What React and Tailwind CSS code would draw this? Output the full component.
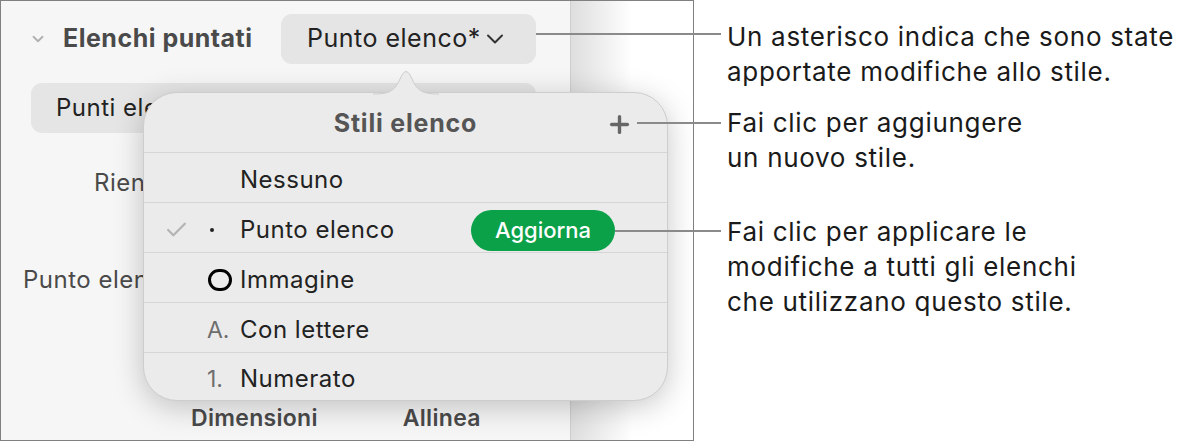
import { Check, ChevronDown, Plus } from "lucide-react";

const font = { fontFamily: "Inter, 'Noto Sans', sans-serif" };

const rows = [
  { label: "Nessuno", marker: null },
  { label: "Punto elenco", marker: "dot", checked: true, update: true },
  { label: "Immagine", marker: "ring" },
  { label: "Con lettere", marker: "A." },
  { label: "Numerato", marker: "1.", last: true },
];

function Marker({ kind }) {
  if (kind === "dot") return <span className="ml-[3px] block h-[4px] w-[4px] rounded-full bg-[#222]" />;
  if (kind === "ring") return <span className="ml-[1px] block h-[22px] w-[24px] rounded-full border-[3px] border-black" />;
  if (kind) return <span className="text-[23px] text-[#6e6e6e]">{kind}</span>;
  return null;
}

function StylePopover() {
  return (
    <div className="absolute left-[142px] top-[91px] w-[525px] h-[309px] rounded-[34px] border border-[#cdcdcd] bg-[#ebebeb] shadow-[0_6px_30px_rgba(0,0,0,0.22)]">
      <svg className="absolute left-[229px] top-[-25px]" width="66" height="27" viewBox="0 0 66 27">
        <path d="M0 26 C14 26 20 24 25 15 L29 7 Q33 0 37 7 L41 15 C46 24 52 26 66 26 L66 27 L0 27 Z" fill="#ebebeb" />
        <path d="M0 26 C14 26 20 24 25 15 L29 7 Q33 0 37 7 L41 15 C46 24 52 26 66 26" fill="none" stroke="#cdcdcd" strokeWidth="1" />
      </svg>

      <div className="grid h-[59px] grid-cols-[1fr_auto_1fr] items-center pt-[3px]">
        <span />
        <span className="text-[25px] font-bold tracking-[0.8px] text-[#555]">Stili elenco</span>
        <span className="justify-self-end pr-[34px] text-[#666]">
          <Plus size={27} strokeWidth={3} />
        </span>
      </div>

      {rows.map((row) => (
        <div
          key={row.label}
          className={`flex items-center border-t border-[#d5d5d5] pl-[20px] pt-[5px] ${row.last ? "h-[48px]" : "h-[50px]"}`}
        >
          <span className="flex w-[25px] justify-center text-[#b4b4b4]">
            {row.checked && <Check size={26} strokeWidth={2.2} />}
          </span>
          <span className="ml-[18px] flex w-[33px] items-center">
            <Marker kind={row.marker} />
          </span>
          <span className="text-[24px] tracking-[0.5px] text-[#222]">{row.label}</span>
          {row.update && (
            <span className="ml-auto mr-[52px] flex h-[41px] w-[144px] items-center justify-center rounded-full bg-[#0aa149] text-[22px] font-medium text-white">
              Aggiorna
            </span>
          )}
        </div>
      ))}
    </div>
  );
}

function Sidebar() {
  return (
    <div className="flex w-[570px] flex-col border-r border-[#cfcfcf] bg-[#f6f6f6]">
      <div className="mt-[13px] flex h-[50px] items-center pl-[28px]">
        <ChevronDown size={18} strokeWidth={2.4} className="text-[#b0b0b0]" />
        <span className="ml-[16px] text-[25px] font-bold tracking-[0.5px] text-[#4a4a4a]">Elenchi puntati</span>
        <div className="ml-auto mr-[34px] flex h-[50px] w-[255px] items-center rounded-[11px] bg-[#e5e5e5] pl-[26px] text-[25px] tracking-[0.5px] text-[#222]">
          Punto elenco*
          <ChevronDown size={28} strokeWidth={1.7} className="text-[#333]" />
        </div>
      </div>

      <div className="ml-[30px] mr-[34px] mt-[19px] flex h-[50px] items-center rounded-[11px] bg-[#e5e5e5] pl-[25px] text-[24px] tracking-[0.5px] text-[#222]">
        Punti elenco
      </div>

      <div className="ml-[93px] mt-[35px] text-[24px] leading-[30px] tracking-[0.5px] text-[#4a4a4a]">Rientro</div>
      <div className="ml-[22px] mt-[67px] text-[24px] leading-[30px] tracking-[0.5px] text-[#4a4a4a]">Punto elenco</div>

      <div className="mt-auto flex pb-[8px] text-[23px] font-semibold leading-[28px] tracking-[0.3px] text-[#4a4a4a]">
        <span className="ml-[190px]">Dimensioni</span>
        <span className="ml-[85px]">Allinea</span>
      </div>
    </div>
  );
}

export default function App() {
  return (
    <div className="relative flex h-[442px] w-[1186px] bg-white" style={font}>
      <div className="relative flex h-[441px] w-[694px] shrink-0 overflow-hidden border border-[#808080]">
        <Sidebar />
        <div className="flex-1 bg-gradient-to-r from-[#dedede] via-white to-white" />
        <StylePopover />
      </div>

      <div className="flex flex-col pl-[33px] pt-[19px] text-[26px] leading-[35px] tracking-[0.7px] text-[#1a1a1a]">
        <p>
          Un asterisco indica che sono state
          <br />
          apportate modifiche allo stile.
        </p>
        <p className="mt-[16px]">
          Fai clic per aggiungere
          <br />
          un nuovo stile.
        </p>
        <p className="mt-[39px]">
          Fai clic per applicare le
          <br />
          modifiche a tutti gli elenchi
          <br />
          che utilizzano questo stile.
        </p>
      </div>

      <div className="absolute left-[536px] top-[33px] h-[2px] w-[185px] bg-[#8a8a8a]" />
      <div className="absolute left-[637px] top-[122px] h-[2px] w-[84px] bg-[#8a8a8a]" />
      <div className="absolute left-[615px] top-[230px] h-[2px] w-[106px] bg-[#8a8a8a]" />
    </div>
  );
}
